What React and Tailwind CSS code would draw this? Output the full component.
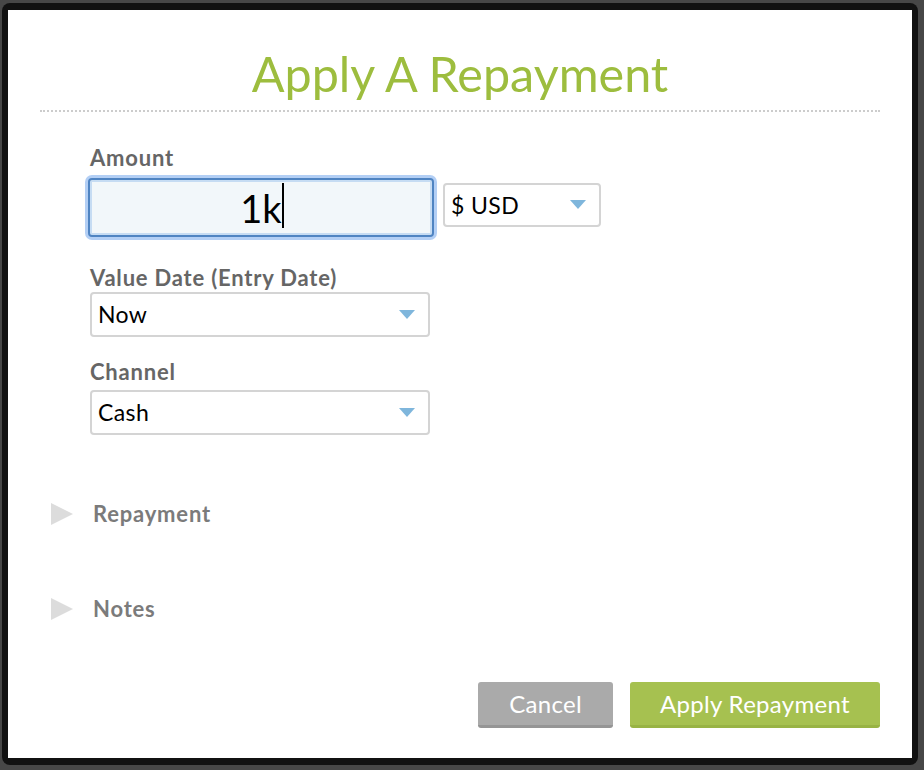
import React from "react";

function Arrow() {
  return (
    <svg width="16" height="10" viewBox="0 0 16 10" className="shrink-0">
      <polygon points="0,0 16,0 8,9" fill="#7fb6dc" />
    </svg>
  );
}

function Select({ value, className }) {
  return (
    <div className={`flex items-center justify-between border-2 border-[#d4d4d4] rounded-[4px] bg-white pl-[6px] pr-[13px] ${className}`}>
      <span className="text-[23px] tracking-[0.4px] text-black leading-none">{value}</span>
      <Arrow />
    </div>
  );
}

function Section({ label }) {
  return (
    <div className="flex items-center h-[24px]">
      <svg width="24" height="24" viewBox="0 0 24 24" className="ml-[50px] shrink-0">
        <polygon points="1,1 23,12 1,23" fill="#dcdcdc" />
      </svg>
      <span className="ml-[19px] text-[22px] tracking-[0.8px] text-[#7b7b7b] font-bold leading-none">{label}</span>
    </div>
  );
}

export default function App() {
  return (
    <div className="w-[924px] h-[770px] bg-[#474747] pt-[3px] pl-[2px]" style={{ fontFamily: "Lato, 'Open Sans', sans-serif" }}>
      <div className="w-[916px] h-[762px] bg-[#111111] rounded-[8px] pt-[7px] pl-[6px]">
        <div className="w-[904px] h-[748px] bg-white flex flex-col">
          <h1 className="mt-[34px] text-center text-[48.5px] leading-[58px] text-[#9dbd3e] font-normal">Apply A Repayment</h1>
          <div className="mx-[32px] mt-[8px] border-t-2 border-dotted border-[#cccccc]"></div>

          <div className="pl-[82px] mt-[33px] flex flex-col">
            <div className="text-[22px] tracking-[0.8px] leading-[26px] text-[#666666] font-bold">Amount</div>
            <div className="flex items-start mt-[7px]">
              <div className="w-[346px] h-[59px] -ml-[2px] rounded-[4px] border-2 border-[#4f84c2] bg-[#f2f7fa] shadow-[0_0_0_3px_#b3cff5,inset_0_0_0_2px_#c6dcf3] flex items-center justify-center">
                <span className="text-[38px] leading-none text-black font-normal relative">
                  1k
                  <span className="absolute -right-[2px] top-[-6px] w-[1.5px] h-[45px] bg-black"></span>
                </span>
              </div>
              <Select value="$ USD" className="ml-[9px] mt-[5px] w-[158px] h-[44px]" />
            </div>

            <div className="mt-[28px] text-[22px] tracking-[0.8px] leading-[26px] text-[#666666] font-bold">Value Date (Entry Date)</div>
            <Select value="Now" className="mt-[1px] w-[340px] h-[45px]" />

            <div className="mt-[22px] text-[22px] tracking-[0.8px] leading-[26px] text-[#666666] font-bold">Channel</div>
            <Select value="Cash" className="mt-[5px] w-[340px] h-[45px]" />
          </div>

          <div className="mt-[67px] flex flex-col gap-[71px] -ml-[8px]">
            <Section label="Repayment" />
            <Section label="Notes" />
          </div>

          <div className="mt-[61px] flex justify-end pr-[32px] gap-[17px]">
            <button className="w-[135px] h-[46px] bg-[#aaaaaa] border-b-[3px] border-[#959595] rounded-[3px] text-white text-[24px] tracking-[0.3px] leading-none">Cancel</button>
            <button className="w-[250px] h-[46px] bg-[#a6c150] border-b-[3px] border-[#98b344] rounded-[3px] text-white text-[24px] tracking-[0.3px] leading-none">Apply Repayment</button>
          </div>
        </div>
      </div>
    </div>
  );
}
